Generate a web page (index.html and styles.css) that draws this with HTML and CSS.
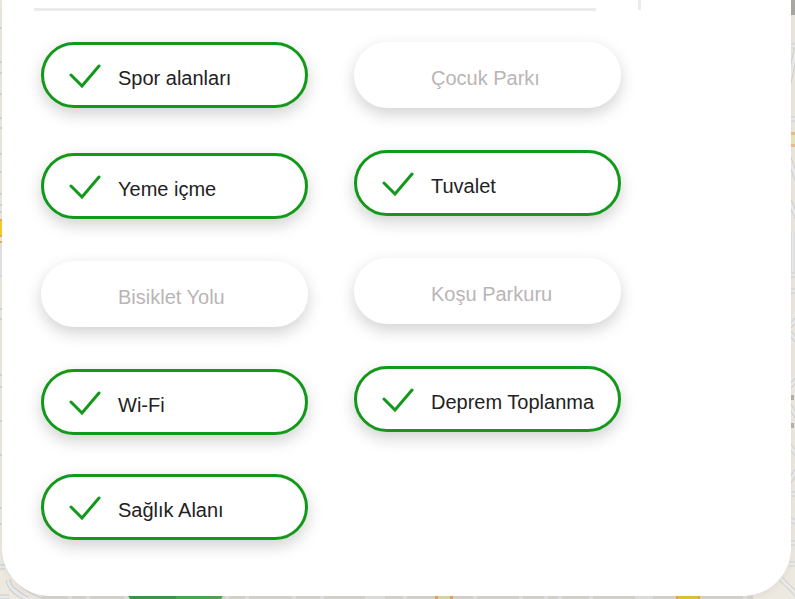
FILE: index.html
```html
<!DOCTYPE html>
<html lang="tr">
<head>
<meta charset="utf-8">
<meta name="viewport" content="width=device-width, initial-scale=1">
<title>Park özellikleri</title>
<link rel="stylesheet" href="styles.css">
</head>
<body>
<div class="page">
  <svg class="map" viewBox="0 0 795 599" preserveAspectRatio="none" aria-hidden="true">
    <rect width="795" height="599" fill="#ede9e1"/>
    <!-- left edge -->
    <g stroke="#d3d3d2" stroke-width="2">
      <path d="M0 28h4M0 62h4M0 73h4M0 94h4M0 118h4M0 128h4M0 154h4M0 172h4M0 194h4M0 205h4M0 212h4M0 276h4M0 309h4M0 319h4M0 375h4M0 387h4M0 421h4M0 455h4M0 508h4M0 524h4"/>
    </g>
    <rect y="245" width="4" height="31" fill="#e3e3e3"/>
    <rect y="219" width="4" height="18" fill="#eda85c"/>
    <rect y="221" width="4" height="14" fill="#f8d02c"/>
    <rect y="241" width="4" height="2" fill="#eda85c"/>
    <!-- right edge -->
    <rect x="790" width="5" height="15" fill="#aaa9a4"/>
    <g fill="none" stroke="#d2d2d0" stroke-width="5">
      <path d="M789 46h8M797 45l-8 38M789 119h8M789 158l8 22M789 200l8 18M793 232v40M789 275h8M789 291h8M797 319l-8 8M789 332l8 9M797 379l-8 8M789 405l8 12M789 445l8 10M797 470l-8 12M789 494h8M789 519l8 4M789 543h8M789 564h8M780 578l17 17"/>
    </g>
    <g fill="none" stroke="#ebebeb" stroke-width="3">
      <path d="M789 46h8M797 45l-8 38M789 119h8M789 158l8 22M789 200l8 18M793 232v40M789 275h8M789 291h8M797 319l-8 8M789 332l8 9M797 379l-8 8M789 405l8 12M789 445l8 10M797 470l-8 12M789 494h8M789 519l8 4M789 543h8M789 564h8M780 578l17 17"/>
    </g>
    <rect x="790" y="132" width="5" height="15" fill="#edbd8c"/>
    <rect x="790" y="135" width="5" height="9" fill="#ebe6b4"/>
    <rect x="790" y="395" width="4" height="5" fill="#b9b2ac"/>
    <rect x="790" y="423" width="4" height="5" fill="#b9b2ac"/>
    <!-- bottom edge -->
    <g fill="none" stroke="#c9cbcb" stroke-width="5">
      <path d="M0 567h5M8 580q2 12 20 19M0 597h9M14 590l12 9M20 582q8 10 30 17"/>
    </g>
    <g fill="none" stroke="#e7e8e8" stroke-width="3">
      <path d="M0 567h5M8 580q2 12 20 19M0 597h9M14 590l12 9M20 582q8 10 30 17"/>
    </g>
    <rect x="42" y="595" width="711" height="4" fill="#dad6cf"/>
    <g stroke="#e2e3e2" stroke-width="4">
      <path d="M70 595v4M88 595v4M126 595v4M227 595v4M247 595v4M294 595v4M322 595v4M405 595v4M475 595v4M521 595v4M546 595v4M560 595v4M591 595v4M640 595v4M745 595v4"/>
    </g>
    <path d="M365 595h20v4h-20zM635 595h18v4h-18z" fill="#e2e2e1"/>
    <path d="M128 595h95l-2 4h-91z" fill="#43974a"/>
    <path d="M176 595h47l-2 4h-45z" fill="#52a855"/>
    <path d="M435 595h18v4h-18zM676 595h24v4h-24z" fill="#e9a65c"/>
    <path d="M438 595h12v4h-12z" fill="#dddaa8"/>
    <path d="M678 595h20v4h-20z" fill="#e5c631"/>
  </svg>

  <main class="card">
    <div class="card-head">
      <div class="rule"></div>
      <div class="divider"></div>
    </div>
    <form class="filters">
      <div class="column column-primary">
        <label class="pill"><input type="checkbox" checked><svg class="tick" viewBox="0 0 32 24" aria-hidden="true"><path d="M2 11 13 22 30 2"/></svg><span class="pill-text">Spor alanları</span></label>
        <label class="pill"><input type="checkbox" checked><svg class="tick" viewBox="0 0 32 24" aria-hidden="true"><path d="M2 11 13 22 30 2"/></svg><span class="pill-text">Yeme içme</span></label>
        <label class="pill"><input type="checkbox"><svg class="tick" viewBox="0 0 32 24" aria-hidden="true"><path d="M2 11 13 22 30 2"/></svg><span class="pill-text">Bisiklet Yolu</span></label>
        <label class="pill"><input type="checkbox" checked><svg class="tick" viewBox="0 0 32 24" aria-hidden="true"><path d="M2 11 13 22 30 2"/></svg><span class="pill-text">Wi-Fi</span></label>
        <label class="pill"><input type="checkbox" checked><svg class="tick" viewBox="0 0 32 24" aria-hidden="true"><path d="M2 11 13 22 30 2"/></svg><span class="pill-text">Sağlık Alanı</span></label>
      </div>
      <div class="column column-secondary">
        <label class="pill"><input type="checkbox"><svg class="tick" viewBox="0 0 32 24" aria-hidden="true"><path d="M2 11 13 22 30 2"/></svg><span class="pill-text">Çocuk Parkı</span></label>
        <label class="pill"><input type="checkbox" checked><svg class="tick" viewBox="0 0 32 24" aria-hidden="true"><path d="M2 11 13 22 30 2"/></svg><span class="pill-text">Tuvalet</span></label>
        <label class="pill"><input type="checkbox"><svg class="tick" viewBox="0 0 32 24" aria-hidden="true"><path d="M2 11 13 22 30 2"/></svg><span class="pill-text">Koşu Parkuru</span></label>
        <label class="pill"><input type="checkbox" checked><svg class="tick" viewBox="0 0 32 24" aria-hidden="true"><path d="M2 11 13 22 30 2"/></svg><span class="pill-text">Deprem Toplanma</span></label>
      </div>
    </form>
  </main>
</div>
</body>
</html>
```
FILE: styles.css
```css
* {
  box-sizing: border-box;
}

body {
  margin: 0;
  font-family: "Liberation Sans", Arial, sans-serif;
  font-size: 20px;
  line-height: 24px;
  color: #222;
}

.page {
  position: relative;
  min-height: 100vh;
  padding: 0 4px 3px 2px;
  overflow: hidden;
}

.map {
  position: absolute;
  inset: 0;
  width: 100%;
  height: 100%;
}

.card {
  position: relative;
  padding: 0 32px 56px;
  border-radius: 0 0 48px 48px;
  background: #fff;
  box-shadow: 0 2px 8px rgba(0, 0, 0, 0.06);
}

.card-head {
  display: flex;
  align-items: flex-end;
  gap: 42px;
}

.rule {
  flex: 0 1 562px;
  height: 3px;
  background: #ebebeb;
}

.divider {
  align-self: flex-start;
  width: 3px;
  height: 10px;
  border-bottom: 0;
  background: #ebebeb;
}

.card-head {
  height: 11px;
}

.filters {
  display: flex;
  gap: 46px;
  padding: 31px 0 0 7px;
}

.column {
  display: grid;
  flex: 0 1 267px;
  align-content: start;
  align-items: start;
}

.column-primary {
  grid-template-rows: 111px 108px 108px 105px auto;
}

.column-secondary {
  grid-auto-rows: 108px;
}

.pill {
  display: flex;
  align-items: center;
  gap: 17px;
  height: 66px;
  padding: 2px 12px 0 25px;
  border: 3px solid #fff;
  border-radius: 33px;
  background: #fff;
  box-shadow: 0 6px 16px rgba(0, 0, 0, 0.18);
  color: #b9b5b5;
  cursor: pointer;
}

.pill:has(input:checked) {
  border-color: #12991a;
  color: #222;
}

.pill input {
  position: absolute;
  width: 1px;
  height: 1px;
  margin: 0;
  opacity: 0;
}

.pill:focus-within {
  outline: 2px solid #12991a;
  outline-offset: 3px;
}

.tick {
  flex: none;
  width: 32px;
  height: 24px;
  visibility: hidden;
}

.pill input:checked + .tick {
  visibility: visible;
}

.tick path {
  fill: none;
  stroke: #12991a;
  stroke-width: 3;
  stroke-linecap: round;
  stroke-linejoin: miter;
}

.pill-text {
  padding-top: 4px;
  white-space: nowrap;
}
```
